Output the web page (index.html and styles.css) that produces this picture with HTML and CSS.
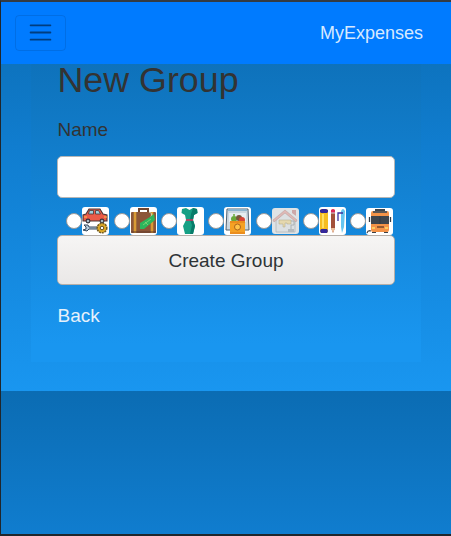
FILE: index.html
```html
<!DOCTYPE html>
<html lang="en">
<head>
<meta charset="utf-8">
<title>MyExpenses</title>
<link rel="stylesheet" href="styles.css">
</head>
<body>
<div class="page">
<nav class="navbar">
  <button class="toggler" type="button" aria-label="Menu"><svg width="30" height="30" viewBox="0 0 30 30"><path d="M4 7h22M4 15h22M4 23h22" fill="none" stroke="rgba(0,0,0,.5)" stroke-width="2" stroke-linecap="round"/></svg></button>
  <a class="brand">MyExpenses</a>
</nav>
<main class="panel">
  <h1>New Group</h1>
  <form class="form">
    <label class="label" for="name">Name</label>
    <input class="field" id="name" type="text">
    <div class="icons">
      <label class="choice"><input type="radio" name="icon"><svg viewBox="0 0 27 28"><path d="M4 7l3-5h11l3 5 4 1v6H1V8z" fill="#ea5b48" stroke="#493635" stroke-width="1.1"/><path d="M7.500 3.500h4V7h-5zm6 0h3l2 3.500h-5z" fill="#9ed0dc" stroke="#493635" stroke-width=".8"/><path d="M2 10h3M22 10h3" stroke="#ffc44d"/><circle cx="6" cy="14" r="1.9" fill="#a9b9c3" stroke="#34313a" stroke-width="1.1"/><circle cx="20" cy="14" r="1.9" fill="#a9b9c3" stroke="#34313a" stroke-width="1.1"/><path d="M2 18l4 0 1 2h9v2H7l-2 2-4-1 3-1v-2z" fill="#b6cbdc" stroke="#35475b"/><circle cx="20" cy="21" r="4.800" fill="#e1ac27" stroke="#725b22" stroke-width="1.6" stroke-dasharray="2 .8"/><circle cx="20" cy="21" r="1.800" fill="#fff" stroke="#5b4a20"/></svg></label>
      <label class="choice"><input type="radio" name="icon"><svg viewBox="0 0 27 28"><path d="M9 6V2h9v4" fill="none" stroke="#70452e" stroke-width="2"/><rect x="1" y="5" width="25" height="21" rx="1" fill="#8c5638"/><path d="M5 5v21M22 5v21" stroke="#d99b35" stroke-width="2.6"/><path d="M1 25h25" stroke="#5e3a2c"/><path d="M19 5q4 1 2 5" fill="none" stroke="#c8d4b7"/><path d="M10 16l10-6 4-3 1 6-11 9h-4z" fill="#2db65c"/><path d="M13 18l8-6M15 15l3 3" stroke="#85d87b" stroke-width=".8"/></svg></label>
      <label class="choice"><input type="radio" name="icon"><svg viewBox="0 0 27 28"><path d="M5 2l4-1 3.500 2L16 1l4 1 .5 4-3.500 2-1 5 2 6-2 8H8l-2-8 3-6-1-5-3.500-2z" fill="#16a085"/><path d="M16 1l4 1 .5 4-3.500 2-1 5 2 6-2 8h-3l2-9-2-5 1-6z" fill="#087b6a"/><path d="M9 13h7" stroke="#d6335b" stroke-width="1.6"/></svg></label>
      <label class="choice"><input type="radio" name="icon"><svg viewBox="0 0 27 28"><path d="M3 2h21l1 21H2z" fill="#cbd7df" stroke="#50606f"/><path d="M4 3h19" stroke="#8bb4ce" stroke-width="2"/><path d="M5 6h17v9H5z" fill="#e7edf0"/><circle cx="10" cy="12" r="3" fill="#69a83a"/><circle cx="15" cy="11" r="3" fill="#78583a"/><circle cx="18" cy="13" r="3" fill="#d84435"/><circle cx="10" cy="8" r="1" fill="#69a83a"/><path d="M6 14h15v13H6z" fill="#f5a124"/><path d="M6 15h15M6 26h15" stroke="#e17b18"/><circle cx="13.5" cy="20" r="3" fill="#ffc34a" stroke="#ac641c"/></svg></label>
      <label class="choice"><input type="radio" name="icon"><svg class="muted" viewBox="0 0 27 26"><path d="M4 12v12h19V12L13 4z" fill="#dce0e2" stroke="#b3b8ba" stroke-width=".8"/><path d="M1 12L13 2l12 10-1 2L13 5 2 14z" fill="#dfb9b6" stroke="#b99c99" stroke-width=".5"/><path d="M20 2h4v6l-4-3z" fill="#cda8a8"/><path d="M7 12h12v4h-4v-1h-2v4h-2v-3H7z" fill="#e5d8ae" stroke="#b0a884" stroke-width=".5"/><path d="M19 13h3v4h-3v4" fill="none" stroke="#a4abae" stroke-width=".9"/><path d="M16 21h6v3h-6z" fill="#b5bbbe"/></svg></label>
      <label class="choice"><input type="radio" name="icon"><svg viewBox="0 0 27 28"><rect x="1" y="2" width="8" height="24" rx="2" fill="#f6bd21"/><path d="M1 5V3l2-1h4l2 1v2l-1 1H2zM2 22h6l1 2-1 2H2l-1-2z" fill="#35289b"/><path d="M4 7v14" stroke="#ffdf64" stroke-width="2"/><path d="M12 6h4v15l-2 5-2-5z" fill="#a35039"/><path d="M12 3q2-2 4 0v3h-4z" fill="#dc2855"/><path d="M12 6h4" stroke="#d3d3dc"/><path d="M12 21h4l-2 5z" fill="#efc29c"/><path d="M22 4q2-4 4 0l-1 16-2 6-1-6z" fill="#65c5f0"/><path d="M24 6h-5v8" fill="none" stroke="#3b319c" stroke-width="1.3"/></svg></label>
      <label class="choice"><input type="radio" name="icon"><svg class="bus" viewBox="0 0 27 27"><path d="M9 1h10v3H9z" fill="#3f454c"/><rect x="5" y="3" width="18" height="21" rx="2" fill="#f39348"/><rect x="5" y="8" width="18" height="8" fill="#3e454d"/><path d="M14 8v8M3.500 9v5M24.500 9v5" stroke="#353d46" stroke-width="1.3"/><path d="M7 4h14" stroke="#5a5654" stroke-width="2"/><path d="M6 20h3M19 20h3" stroke="#ffe069" stroke-width="1.5"/><path d="M11 19h7" stroke="#75472c" stroke-width="1.5"/><path d="M6 24h4v1H6zm12 0h4v1h-4z" fill="#3c4147"/><path d="M1 25q1-3 4-2" fill="none" stroke="#4d4a4a" stroke-width="1.3"/></svg></label>
    </div>
    <button class="submit" type="button">Create Group</button>
  </form>
  <a class="back">Back</a>
</main>
</div>
</body>
</html>
```
FILE: styles.css
```css
* { box-sizing: border-box; }
html { background: #222529; }
body { margin: 0; font-family: "Liberation Sans", Arial, sans-serif; font-size: 19px; color: #333; }
.page {
  height: 536px;
  border: solid #20262b;
  border-width: 2px 0 2px 1px;
  border-top-color: #343b43;
  background: linear-gradient(#0b6cb3, #107dcf 37%, #1996f0) 0 0 / 100% 389px repeat-y padding-box;
  overflow: hidden;
}
.navbar {
  height: 62px;
  padding: 0 28px 0 14px;
  display: flex;
  align-items: center;
  justify-content: space-between;
  background: #007bff;
}
.toggler {
  width: 51px;
  height: 36px;
  padding: 0;
  display: flex;
  align-items: center;
  justify-content: center;
  background: transparent;
  border: 1px solid rgba(0, 0, 0, .1);
  border-radius: 4px;
}
.toggler svg { width: 29px; height: 27px; margin-top: -1px; }
.brand { font-size: 18px; line-height: 24px; color: rgba(255, 255, 255, .85); }
.panel {
  width: 390px;
  height: 298px;
  margin-left: 30px;
  padding: 0 26px;
  background: linear-gradient(#0e72bb, #1996f0 94%);
}
h1 { margin: 0; padding-left: .5px; font-size: 35.8px; line-height: 40px; font-weight: 400; position: relative; top: -4px; }
.form { display: flex; flex-direction: column; padding-top: 14px; }
.label { line-height: 24px; margin-bottom: 14px; padding-left: .5px; }
.field {
  width: 338px;
  height: 42px;
  border: 1px solid #b6b6b6;
  border-radius: 5px;
  background: #fff;
}
.icons { display: flex; height: 37px; padding: 9px 0 0 9px; gap: 5.4px; }
.choice { flex: none; display: flex; align-items: center; width: 42px; height: 28px; }
.choice input {
  appearance: none;
  flex: none;
  width: 16px;
  height: 16px;
  margin: 0;
  border: 1px solid #999;
  border-radius: 50%;
  background: #fff;
}
.choice svg { flex: none; width: 27px; height: 28px; background: #fff; border-radius: 3px; }
.choice:nth-child(2) { position: relative; left: .5px; }
.choice svg.muted { height: 26px; background: #dfe3e5; }
.choice svg.bus { height: 27px; align-self: flex-end; }
.submit {
  width: 338px;
  height: 50px;
  padding: 2px 0 0;
  border: 1px solid #b6afa9;
  border-radius: 5px;
  background: linear-gradient(#f6f5f4, #eae8e7);
  font: inherit;
  color: #2e3436;
}
.back { display: block; margin-top: 19px; line-height: 24px; padding-left: .5px; color: #e6f1fb; }
```
